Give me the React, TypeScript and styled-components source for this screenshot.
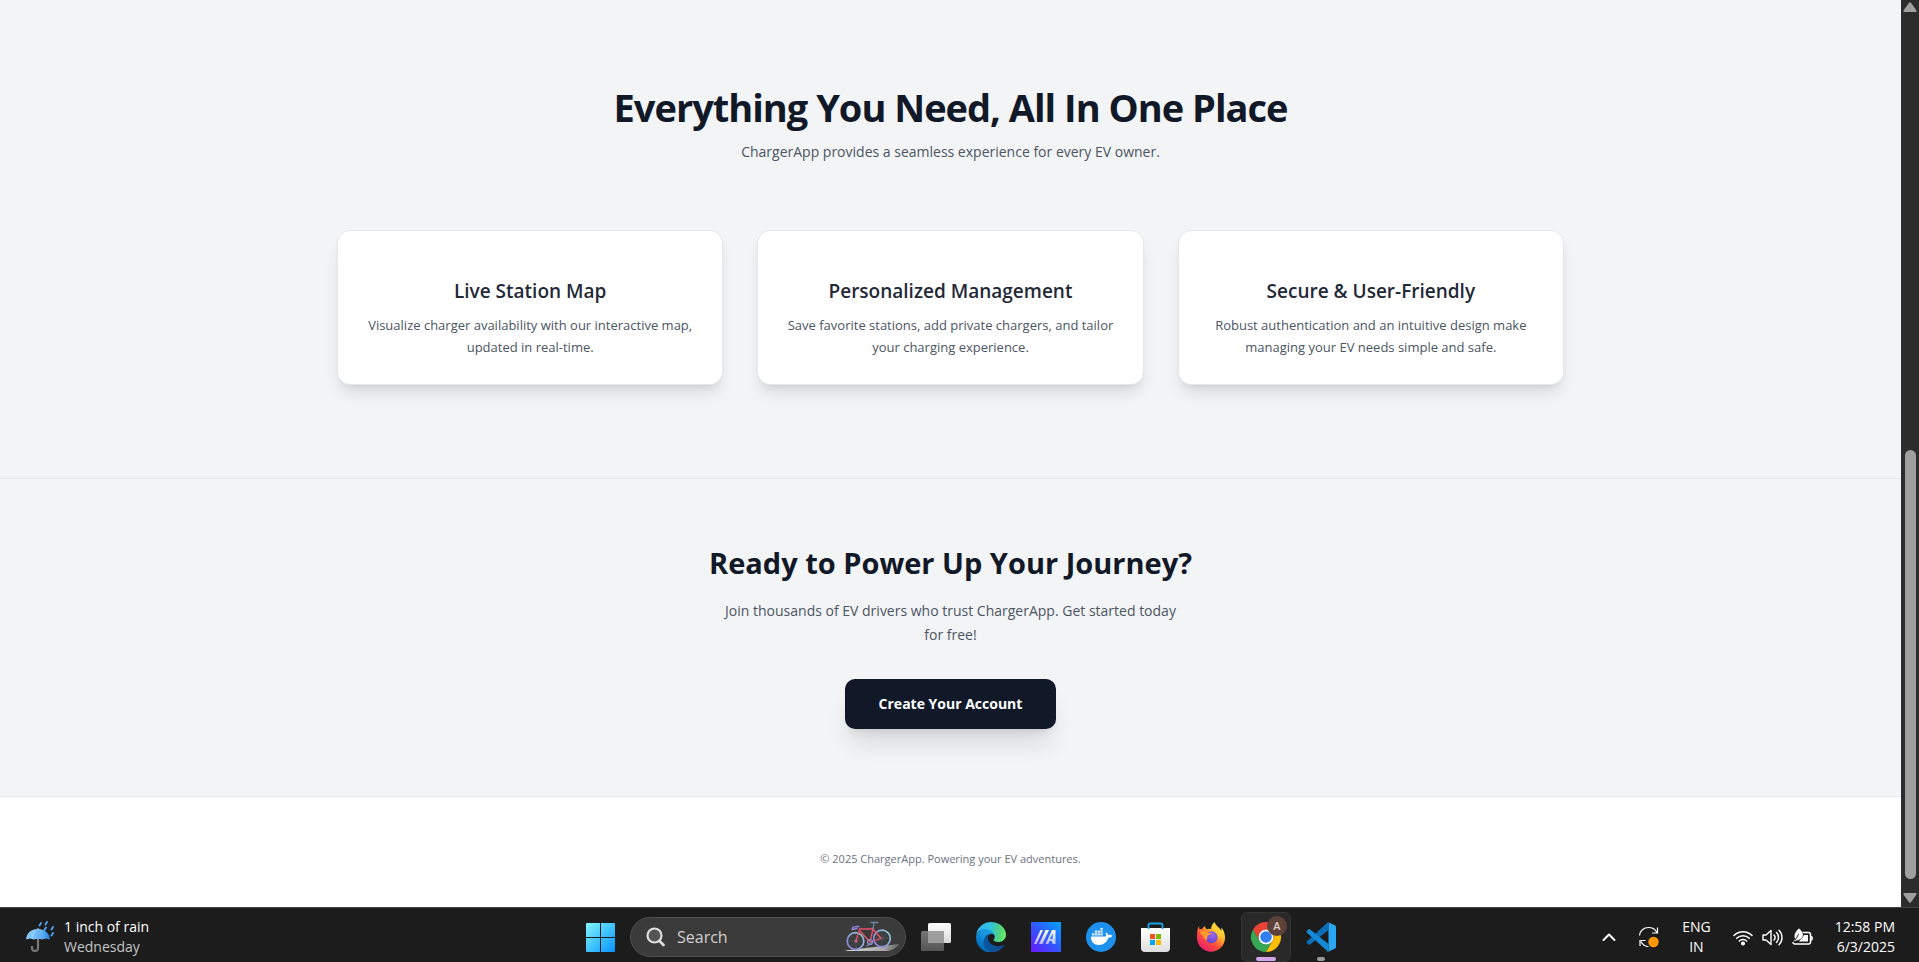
import React from "react";
import styled, { createGlobalStyle } from "styled-components";

const GlobalStyle = createGlobalStyle`
  *, *::before, *::after { box-sizing: border-box; }
  body {
    margin: 0;
    font-family: "Open Sans", "Noto Sans", sans-serif;
    color: #111827;
    background: #ffffff;
  }
  h1, h2, h3, p { margin: 0; }
  button, input { font: inherit; }
`;

const Screen = styled.div`
  display: flex;
  flex-direction: column;
  min-height: 100vh;
`;

const Browser = styled.div`
  display: flex;
  flex: 1;
`;

const Page = styled.div`
  display: flex;
  flex-direction: column;
  flex: 1;
  min-width: 0;
  text-align: center;
`;

const Features = styled.section`
  padding: 79px 24px 93px;
  background: #f3f4f6;
  border-bottom: 1px solid #e5e7eb;
`;

const FeaturesTitle = styled.h2`
  font-size: 38px;
  line-height: 56px;
  font-weight: 700;
  letter-spacing: -1px;
`;

const Lead = styled.p`
  font-size: 14px;
  line-height: 24px;
  color: #4b5563;
`;

const FeaturesLead = styled(Lead)`
  margin-top: 5px;
`;

const CardGrid = styled.div`
  display: grid;
  grid-template-columns: repeat(auto-fit, minmax(300px, 1fr));
  gap: 34px;
  max-width: 1227px;
  margin: 66px auto 0;
`;

const Card = styled.article`
  padding: 44px 28px 26px;
  background: #ffffff;
  border: 1px solid #e5e7eb;
  border-radius: 13px;
  box-shadow: 0 11px 16px -3px rgba(0, 0, 0, 0.1), 0 4px 7px -4px rgba(0, 0, 0, 0.1);
`;

const CardTitle = styled.h3`
  font-size: 19px;
  line-height: 32px;
  font-weight: 600;
  color: #1f2937;
`;

const CardText = styled.p`
  margin-top: 7px;
  font-size: 13px;
  line-height: 22px;
  color: #4b5563;
`;

const CallToAction = styled.section`
  display: flex;
  flex-direction: column;
  align-items: center;
  padding: 64px 24px 67px;
  background: #f3f4f6;
  border-bottom: 1px solid #e5e7eb;
`;

const CallTitle = styled.h2`
  font-size: 29px;
  line-height: 40px;
  font-weight: 700;
`;

const CallLead = styled(Lead)`
  max-width: 470px;
  margin-top: 16px;
`;

const PrimaryButton = styled.button`
  margin-top: 32px;
  padding: 13px 34px;
  border: 0;
  border-radius: 10px;
  background: #111827;
  color: #ffffff;
  font-size: 14px;
  line-height: 24px;
  font-weight: 700;
  box-shadow: 0 20px 25px -5px rgba(0, 0, 0, 0.1), 0 8px 10px -6px rgba(0, 0, 0, 0.1);
`;

const Footer = styled.footer`
  flex: 1;
  padding: 52px 24px 38px;
  font-size: 11px;
  line-height: 20px;
  color: #6b7280;
`;

const ScrollTrack = styled.div`
  display: flex;
  flex-direction: column;
  align-items: center;
  width: 18px;
  padding: 2px 0 4px;
  background: #2c2c2c;
`;

const ScrollSpace = styled.div`
  flex: 438;
`;

const ScrollThumb = styled.div`
  flex: 429;
  width: 11px;
  margin-bottom: 14px;
  border-radius: 6px;
  background: #9f9f9f;
`;

const Taskbar = styled.nav`
  display: grid;
  grid-template-columns: 1fr auto 1fr;
  align-items: center;
  height: 55px;
  padding-top: 4px;
  background: #1c1c1c;
  border-top: 1px solid #434343;
  color: #ffffff;
  font-size: 14px;
  line-height: 20px;
`;

const BarButton = styled.button`
  display: flex;
  align-items: center;
  padding: 0;
  border: 0;
  background: none;
  color: inherit;
`;

const Weather = styled(BarButton)`
  gap: 9px;
  margin-left: 25px;
  text-align: left;
`;

const Lines = styled.span<{ $align?: string }>`
  display: flex;
  flex-direction: column;
  text-align: ${(p) => p.$align ?? "left"};
`;

const Muted = styled.span`
  color: #c4c4c4;
`;

const Apps = styled.div`
  display: flex;
  align-items: center;
  gap: 5px;
  padding-left: 2px;
`;

const AppButton = styled(BarButton)<{ $active?: boolean }>`
  position: relative;
  justify-content: center;
  width: 50px;
  height: 50px;
  border: 1px solid ${(p) => (p.$active ? "#333333" : "transparent")};
  border-radius: 6px;
  background: ${(p) => (p.$active ? "#292929" : "transparent")};
`;

const Indicator = styled.span<{ $active?: boolean }>`
  position: absolute;
  bottom: 0;
  width: ${(p) => (p.$active ? "20px" : "8px")};
  height: 4px;
  border-radius: 2px;
  background: ${(p) => (p.$active ? "#d3a5e8" : "#9a9a9a")};
`;

const SearchBox = styled.label`
  display: flex;
  align-items: center;
  gap: 12px;
  width: 276px;
  height: 40px;
  padding: 0 6px 0 15px;
  border: 1px solid #4f4f4f;
  border-radius: 20px;
  background: #3b3b3b;
`;

const SearchInput = styled.input`
  flex: 1;
  min-width: 0;
  padding: 0;
  border: 0;
  outline: 0;
  background: none;
  color: #ffffff;
  font-size: 16px;
  &::placeholder { color: #d0d0d0; opacity: 1; }
`;

const Tray = styled.div`
  display: flex;
  align-items: center;
  justify-content: flex-end;
  gap: 22px;
  padding-right: 24px;
`;

const StatusIcons = styled(BarButton)`
  gap: 9px;
`;

const Umbrella = () => (
  <svg width="30" height="32" viewBox="0 0 30 32" fill="none">
    <defs>
      <linearGradient id="canopy" x1="0" y1="0" x2="1" y2="0">
        <stop offset="0" stopColor="#7cc4fb" />
        <stop offset=".45" stopColor="#8fd0ff" />
        <stop offset="1" stopColor="#1f7fe0" />
      </linearGradient>
    </defs>
    <path d="M13 7v20a3 3 0 0 1-6 0v-2" stroke="#777" strokeWidth="2.2" />
    <path d="M1 18.500C1.500 12 6.500 8 13 8s11.500 4 12 10.500l-4-1-4 1-4-1-4 1-4-1z" fill="url(#canopy)" />
    <path d="M9 18.300c0-5 1.500-9 4-10 2.500 1 4 5 4 10l-4-1z" fill="#5aa9f0" opacity=".6" />
    <path d="M16 2l-1.500 2.500M22 1l-1.500 2.500M21 6.500l-1.500 2.500M28 6l-1.500 2.500M28 12l-1.500 2.500" stroke="#4fa6f5" strokeWidth="1.800" strokeLinecap="round" />
  </svg>
);

const StartIcon = () => (
  <svg width="29" height="29" viewBox="0 0 29 29">
    <defs>
      <linearGradient id="start" x1="0" y1="0" x2="29" y2="29" gradientUnits="userSpaceOnUse">
        <stop offset="0" stopColor="#84f6ff" />
        <stop offset=".5" stopColor="#42c4ff" />
        <stop offset="1" stopColor="#0791ff" />
      </linearGradient>
    </defs>
    <path fill="url(#start)" d="M1 0h13v14H0V1a1 1 0 0 1 1-1zM15 0h13a1 1 0 0 1 1 1v13H15zM0 15h14v14H1a1 1 0 0 1-1-1zM15 15h14v13a1 1 0 0 1-1 1H15z" />
  </svg>
);

const SearchIcon = () => (
  <svg width="19" height="20" viewBox="0 0 19 20" fill="none" stroke="#dedede" strokeWidth="2.200" strokeLinecap="round">
    <circle cx="8.500" cy="8.500" r="7" fill="#555" />
    <path d="M13.500 14l4 4" strokeWidth="2.600" />
  </svg>
);

const Bicycle = () => (
  <svg width="54" height="32" viewBox="0 0 54 32" fill="none">
    <defs>
      <linearGradient id="ground" x1="0" y1="0" x2="1" y2="0">
        <stop offset="0" stopColor="#d8d8d8" />
        <stop offset=".7" stopColor="#a8a8a8" />
        <stop offset="1" stopColor="#666" />
      </linearGradient>
      <linearGradient id="wheel" x1="0" y1="1" x2="1" y2="0">
        <stop offset="0" stopColor="#8a76dc" />
        <stop offset="1" stopColor="#8ccfd8" />
      </linearGradient>
    </defs>
    <path d="M0 29.500L54 23c-2 4-7 6.500-12 7H2z" fill="url(#ground)" />
    <g strokeWidth=".4" stroke="#5f7387">
      <path d="M11 12v16M3 20h16M5.500 14.500l11 11M5.500 25.500l11-11M37 9v16M29 17h16M31.500 11.500l11 11M31.500 22.500l11-11" />
    </g>
    <circle cx="10.500" cy="20" r="8.300" stroke="url(#wheel)" strokeWidth="1.700" />
    <circle cx="37" cy="17.500" r="8.300" stroke="url(#wheel)" strokeWidth="1.700" />
    <path d="M11 20l4-13M14.500 8h13.500M15 10l10 11 3-13 8 9.500-11 3.500" stroke="#e8526b" strokeWidth="1.300" strokeLinejoin="round" />
    <path d="M7 8.500c0-3 2-3 7-3M7 8.500l5-1" stroke="#9185dd" strokeWidth="1.400" strokeLinecap="round" />
    <path d="M26 1.500h7M28 8l1-6M22 25l6-5" stroke="#6f86a8" strokeWidth="1.400" strokeLinecap="round" />
    <circle cx="25" cy="21" r="2.500" stroke="#8591d8" strokeWidth="1.200" />
    <circle cx="11" cy="20" r="1.500" fill="#d45f80" />
  </svg>
);

const TaskViewIcon = () => (
  <svg width="30" height="28" viewBox="0 0 30 28">
    <defs>
      <linearGradient id="pane" x1="0" y1="0" x2="0" y2="1">
        <stop offset="0" stopColor="#fff" />
        <stop offset="1" stopColor="#d9d9d9" />
      </linearGradient>
      <linearGradient id="paneBack" x1="0" y1="0" x2="0" y2="1">
        <stop offset="0" stopColor="#777" />
        <stop offset="1" stopColor="#555" />
      </linearGradient>
    </defs>
    <rect y="8" width="23" height="20" rx="1.500" fill="url(#paneBack)" />
    <rect x="7" width="23" height="20" rx="1.500" fill="url(#pane)" />
    <path d="M7 8h16v12H8.500A1.500 1.500 0 0 1 7 18.500z" fill="#9d9d9d" />
  </svg>
);

const EdgeIcon = () => (
  <svg width="30" height="30" viewBox="0 0 256 256">
    <defs>
      <linearGradient id="edgeA" x1="60" y1="178" x2="237" y2="178" gradientUnits="userSpaceOnUse">
        <stop offset="0" stopColor="#0c59a4" />
        <stop offset="1" stopColor="#114a8b" />
      </linearGradient>
      <linearGradient id="edgeB" x1="150" y1="100" x2="40" y2="225" gradientUnits="userSpaceOnUse">
        <stop offset="0" stopColor="#1b9de2" />
        <stop offset=".4" stopColor="#1595df" />
        <stop offset="1" stopColor="#0067b8" />
      </linearGradient>
      <linearGradient id="edgeC" x1="10" y1="70" x2="245" y2="110" gradientUnits="userSpaceOnUse">
        <stop offset="0" stopColor="#35b5f1" />
        <stop offset=".45" stopColor="#2fc3df" />
        <stop offset=".8" stopColor="#50d27c" />
        <stop offset="1" stopColor="#66eb6e" />
      </linearGradient>
    </defs>
    <path fill="url(#edgeB)" d="M110.340 246.340A79.200 79.200 0 0 1 87.600 225a80.720 80.720 0 0 1 29.530-120c3.120-1.470 8.450-4.130 15.540-4a32.350 32.350 0 0 1 25.690 13 31.880 31.880 0 0 1 6.360 18.660c0-.21 24.460-79.600-80-79.600-43.900 0-84.720 41.660-84.720 78.210a130.150 130.150 0 0 0 12.110 56 128 128 0 0 0 156.380 67.110 75.550 75.550 0 0 1-58.150-8.040z" />
    <path fill="url(#edgeA)" d="M235.680 195.460a93.730 93.730 0 0 1-10.540 4.710 101.870 101.870 0 0 1-35.900 6.460c-47.320 0-88.540-32.550-88.540-74.320a31.480 31.480 0 0 1 16.430-27.310c-42.800 1.800-53.800 46.400-53.800 72.530 0 73.880 68.090 81.370 82.760 81.370 7.910 0 19.840-2.300 27-4.560l1.310-.44a128.340 128.340 0 0 0 66.600-52.800 4 4 0 0 0-5.320-5.640z" />
    <path fill="url(#edgeC)" d="M152.300 148.900c-.81 1.050-3.300 2.500-3.300 5.660 0 2.610 1.700 5.120 4.720 7.230 14.380 10 41.490 8.680 41.560 8.680a59.560 59.560 0 0 0 30.270-8.350A61.380 61.380 0 0 0 256 109.200c.26-22.410-8-37.310-11.340-43.910C223.460 23.840 177.720 0 128 0A128 128 0 0 0 0 126.200c.48-36.540 36.800-66.050 80-66.050 3.500 0 23.460.34 42 10.070 16.340 8.580 24.900 18.940 30.850 29.210 6.180 10.670 7.280 24.150 7.280 29.520s-2.740 13.330-7.830 19.950z" />
  </svg>
);

const MyAsusIcon = () => (
  <svg width="30" height="30" viewBox="0 0 30 30">
    <defs>
      <linearGradient id="asus" x1="0" y1="30" x2="30" y2="0" gradientUnits="userSpaceOnUse">
        <stop offset="0" stopColor="#6a16ff" />
        <stop offset=".5" stopColor="#3157ff" />
        <stop offset="1" stopColor="#00a5ff" />
      </linearGradient>
      <linearGradient id="asusMark" x1="0" y1="1" x2="0" y2="0">
        <stop offset="0" stopColor="#fff" stopOpacity=".6" />
        <stop offset="1" stopColor="#fff" />
      </linearGradient>
    </defs>
    <path fill="url(#asus)" d="M0 0h30v30H0z" />
    <path fill="url(#asusMark)" d="M3 22L9.500 8H12L5.500 22zM8 22l6.500-14H18l-6.500 14zM14.500 22L21 8h3.500v14h-2.800l-1.200-3h-2l-1.200 3z" />
    <path fill="#3b6dff" d="M19 17l2.700-6v6z" />
  </svg>
);

const DockerIcon = () => (
  <svg width="30" height="30" viewBox="0 0 30 30">
    <circle cx="15" cy="15" r="15" fill="#1d8fed" />
    <path fill="#fff" d="M5 14.500h14.800c.6-1.300.3-3-.5-4.300 1.500.4 2.600 1.500 2.900 2.800 1.500-.4 3.100-.1 4.300.8-.9 1.400-2.300 1.900-4 1.800C21 20.500 17.500 23 13 23c-5 0-8.200-3-8-8.500z" />
    <path fill="#d7ecfc" d="M6 11.300h2.300v2.300H6zM8.800 11.300h2.300v2.300H8.800zM11.600 11.300h2.300v2.300h-2.300zM14.400 11.300h2.300v2.300h-2.300zM8.800 8.600h2.300v2.200H8.800zM11.600 8.600h2.300v2.200h-2.300zM14.400 8.600h2.300v2.200h-2.300zM14.400 6h2.300v2.100h-2.300z" />
  </svg>
);

const StoreIcon = () => (
  <svg width="30" height="30" viewBox="0 0 30 30">
    <defs>
      <linearGradient id="bag" x1="0" y1="0" x2="0" y2="1">
        <stop offset="0" stopColor="#fff" />
        <stop offset="1" stopColor="#dedede" />
      </linearGradient>
    </defs>
    <path d="M0 6h29v20a4 4 0 0 1-4 4H4a4 4 0 0 1-4-4z" fill="url(#bag)" />
    <path d="M7.500 7V3A1.500 1.500 0 0 1 9 1.500h11A1.500 1.500 0 0 1 21.500 3v4" fill="none" stroke="#18a5e8" strokeWidth="1.800" />
    <path fill="#f25022" d="M9 12h5v5H9z" />
    <path fill="#7fba00" d="M15 12h5v5h-5z" />
    <path fill="#00a4ef" d="M9 18h5v5H9z" />
    <path fill="#ffb900" d="M15 18h5v5h-5z" />
  </svg>
);

const FirefoxIcon = () => (
  <svg width="30" height="30" viewBox="0 0 30 30">
    <defs>
      <linearGradient id="fox" x1="24" y1="3" x2="5" y2="27" gradientUnits="userSpaceOnUse">
        <stop offset="0" stopColor="#fff24a" />
        <stop offset=".3" stopColor="#ffb52c" />
        <stop offset=".6" stopColor="#ff5038" />
        <stop offset="1" stopColor="#e51d73" />
      </linearGradient>
      <radialGradient id="globe" cx=".6" cy=".3" r=".8">
        <stop offset="0" stopColor="#a067ee" />
        <stop offset="1" stopColor="#5b41d0" />
      </radialGradient>
    </defs>
    <path fill="url(#fox)" d="M18.500 0c-2 2-3.500 4.500-3.500 7-1-.5-3-.5-4 .2C9.500 6.300 9 5 9 4 7.700 4.700 6.500 6 6 7.200c-1-.2-1.800-.2-2.300.1C3 6.500 3 5 3.200 4 1.500 6 1 9 1 15.500 1 23.500 7 29.700 15 29.700s14-6.200 14-14.200c0-4-1.500-8-4-10 .5 1.300.6 2.500.4 3.500C24 5.500 19.500 4 18.500 0z" />
    <circle cx="15.500" cy="15.200" r="6" fill="url(#globe)" />
    <path fill="#ff9a2e" d="M3.500 10c3-1.500 6-1 8 .7l4 .3c0 1.500-3.500 2-4 3-.5 1.300.3 2.700-1 4.500-2.500-1.500-4-5-7-8.500z" />
    <path fill="#ffcf35" d="M18 8c3 2 5 4 5 8 2-1 2.500-4 1.500-7C23 6 20 4 18.500 1 16.500 3.500 16 6 18 8z" />
  </svg>
);

const ChromeIcon = () => (
  <svg width="44" height="44" viewBox="0 0 44 44">
    <path fill="#ea4335" d="M9 14.500A15 15 0 0 1 35 14.500H22a7.500 7.500 0 0 0-6.500 11.300z" />
    <path fill="#34a853" d="M9 14.500l6.500 11.300A7.500 7.500 0 0 0 28.500 25.800L22 37A15 15 0 0 1 9 14.500z" />
    <path fill="#fbbc04" d="M35 14.500A15 15 0 0 1 22 37l6.500-11.200A7.500 7.500 0 0 0 22 14.500z" />
    <circle cx="22" cy="22" r="7.500" fill="#fff" />
    <circle cx="22" cy="22" r="5.800" fill="#2f7ff0" />
    <circle cx="33" cy="11" r="10" fill="#5d4037" />
    <text x="33" y="15" textAnchor="middle" fontSize="11" fontWeight="600" fill="#d8d0cc">A</text>
  </svg>
);

const CodeIcon = () => (
  <svg width="30" height="30" viewBox="0 0 30 30">
    <path fill="#0b6fb8" d="M22 .3L1 19.300c-.6.500-.6 1.300 0 1.900l1.500 1.400c.5.400 1.100.4 1.600 0L22.500 8z" />
    <path fill="#1489d6" d="M22 29.700L1 10.700c-.6-.5-.6-1.300 0-1.900l1.500-1.400c.5-.4 1.100-.4 1.600 0L22.500 22z" />
    <path fill="#2aa7f2" d="M22 .2l6.800 3.100c.8.400 1.200 1 1.200 1.800v19.800c0 .8-.4 1.400-1.200 1.800L22 29.800c-.7.200-1.300 0-1.800-.5.900.8 2.300.2 2.300-1V1.700c0-1.200-1.400-1.800-2.300-1 .5-.5 1.100-.7 1.800-.5z" />
  </svg>
);

const ChevronIcon = () => (
  <svg width="14" height="10" viewBox="0 0 14 10" fill="none" stroke="#fff" strokeWidth="2" strokeLinecap="round" strokeLinejoin="round">
    <path d="M1.500 8L7 2.500 12.500 8" />
  </svg>
);

const UpdateIcon = () => (
  <svg width="22" height="22" viewBox="0 0 22 22" fill="none" stroke="#fff" strokeWidth="1.200">
    <path d="M1.500 9.500C2 5 5.500 1.500 10.500 1.500c4 0 7 2 8.500 5M19.500 1.500V7H14M2 20v-5.500h5.500M3 15.500c1.500 3 4 5 7.500 5" />
    <circle cx="15.500" cy="16" r="5.200" fill="#ff9800" stroke="none" />
  </svg>
);

const WifiIcon = () => (
  <svg width="20" height="17" viewBox="0 0 20 17" fill="none" stroke="#fff" strokeWidth="1.500" strokeLinecap="round">
    <path d="M1 6.500a12.700 12.700 0 0 1 18 0M3.700 9.300a9 9 0 0 1 12.600 0M6.300 12a5.300 5.300 0 0 1 7.400 0" />
    <circle cx="10" cy="14.500" r="1.300" fill="#fff" />
  </svg>
);

const SpeakerIcon = () => (
  <svg width="21" height="17" viewBox="0 0 21 17" fill="none" stroke="#fff" strokeWidth="1.400" strokeLinecap="round" strokeLinejoin="round">
    <path d="M1 6v5h3l5 4.500v-14L4 6zM12 6c1.300 1.400 1.300 3.600 0 5M14.500 3.500c2.700 2.800 2.700 7.200 0 10M17 1.200c4 4 4 10.600 0 14.600" />
  </svg>
);

const BatteryIcon = () => (
  <svg width="21" height="18" viewBox="0 0 21 18" fill="none">
    <path d="M10 4.500h6.500a2 2 0 0 1 2 2V14a2 2 0 0 1-2 2H3a2 2 0 0 1-2-2" stroke="#fff" strokeWidth="1.500" />
    <path d="M19 8.500c1.600.4 1.600 3.200 0 3.600" stroke="#fff" strokeWidth="1.600" />
    <path d="M12 7h4v6.500H7z" fill="#fff" />
    <path d="M7 0c3 3 5.500 6 3.500 9.500C9 12 4.500 12.500 1 14l2-3C1 7 3 4 7 0z" fill="#fff" stroke="#1c1c1c" strokeWidth=".6" />
    <path d="M3 12c1.500-2 2.500-3.500 3.500-6" stroke="#1c1c1c" strokeWidth="1" />
  </svg>
);

const ScrollArrow = ({ down }: { down?: boolean }) => (
  <svg width="14" height="10" viewBox="0 0 14 10">
    <path
      d={down ? "M1 0h12q1 .5.500 1.500L8 9.300q-1 1-2 0L.5 1.500Q0 .5 1 0z" : "M1 10h12q1-.5.500-1.500L8 .7q-1-1-2 0L.5 8.500Q0 9.500 1 10z"}
      fill="#9f9f9f"
    />
  </svg>
);

const features = [
  { title: "Live Station Map", text: "Visualize charger availability with our interactive map, updated in real-time." },
  { title: "Personalized Management", text: "Save favorite stations, add private chargers, and tailor your charging experience." },
  { title: "Secure & User-Friendly", text: "Robust authentication and an intuitive design make managing your EV needs simple and safe." },
];

const apps = [
  { name: "Task view", Icon: TaskViewIcon },
  { name: "Microsoft Edge", Icon: EdgeIcon },
  { name: "MyASUS", Icon: MyAsusIcon },
  { name: "Docker Desktop", Icon: DockerIcon },
  { name: "Microsoft Store", Icon: StoreIcon },
  { name: "Firefox", Icon: FirefoxIcon },
  { name: "Google Chrome", Icon: ChromeIcon, open: true, active: true },
  { name: "Visual Studio Code", Icon: CodeIcon, open: true },
];

export default function App() {
  return (
    <Screen>
      <GlobalStyle />
      <Browser>
        <Page>
          <Features>
            <FeaturesTitle>Everything You Need, All In One Place</FeaturesTitle>
            <FeaturesLead>ChargerApp provides a seamless experience for every EV owner.</FeaturesLead>
            <CardGrid>
              {features.map((f) => (
                <Card key={f.title}>
                  <CardTitle>{f.title}</CardTitle>
                  <CardText>{f.text}</CardText>
                </Card>
              ))}
            </CardGrid>
          </Features>
          <CallToAction>
            <CallTitle>Ready to Power Up Your Journey?</CallTitle>
            <CallLead>Join thousands of EV drivers who trust ChargerApp. Get started today for free!</CallLead>
            <PrimaryButton type="button">Create Your Account</PrimaryButton>
          </CallToAction>
          <Footer>© 2025 ChargerApp. Powering your EV adventures.</Footer>
        </Page>
        <ScrollTrack aria-hidden="true">
          <ScrollArrow />
          <ScrollSpace />
          <ScrollThumb />
          <ScrollArrow down />
        </ScrollTrack>
      </Browser>
      <Taskbar aria-label="Taskbar">
        <Weather type="button">
          <Umbrella />
          <Lines>
            <span>1 inch of rain</span>
            <Muted>Wednesday</Muted>
          </Lines>
        </Weather>
        <Apps>
          <AppButton type="button" aria-label="Start">
            <StartIcon />
          </AppButton>
          <SearchBox>
            <SearchIcon />
            <SearchInput type="text" placeholder="Search" aria-label="Search" />
            <Bicycle />
          </SearchBox>
          {apps.map(({ name, Icon, open, active }) => (
            <AppButton key={name} type="button" aria-label={name} $active={active}>
              <Icon />
              {open && <Indicator $active={active} />}
            </AppButton>
          ))}
        </Apps>
        <Tray>
          <BarButton type="button" aria-label="Show hidden icons">
            <ChevronIcon />
          </BarButton>
          <BarButton type="button" aria-label="Update available">
            <UpdateIcon />
          </BarButton>
          <BarButton type="button">
            <Lines $align="center">
              <span>ENG</span>
              <span>IN</span>
            </Lines>
          </BarButton>
          <StatusIcons type="button" aria-label="Network, volume and battery">
            <WifiIcon />
            <SpeakerIcon />
            <BatteryIcon />
          </StatusIcons>
          <BarButton type="button">
            <Lines $align="right">
              <span>12:58 PM</span>
              <span>6/3/2025</span>
            </Lines>
          </BarButton>
        </Tray>
      </Taskbar>
    </Screen>
  );
}
